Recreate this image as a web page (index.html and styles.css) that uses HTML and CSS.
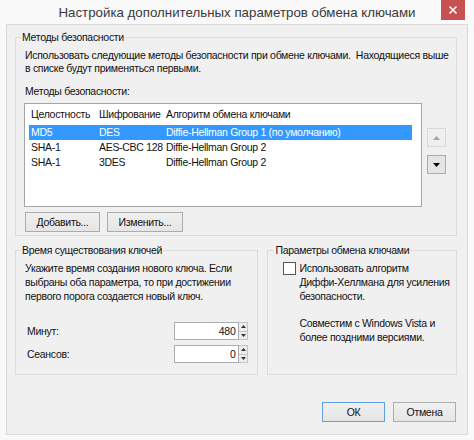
FILE: index.html
```html
<!DOCTYPE html>
<html lang="ru">
<head>
<meta charset="utf-8">
<title>Настройка дополнительных параметров обмена ключами</title>
<link rel="stylesheet" href="styles.css">
</head>
<body>
<div class="window">
  <div class="titlebar">
    <div class="title">Настройка дополнительных параметров обмена ключами</div>
    <div class="close">
      <svg width="10" height="10" viewBox="0 0 10 10"><path d="M1.5 1.5 L8.5 8.5 M8.5 1.5 L1.5 8.5" stroke="#fff" stroke-width="1.6" fill="none"/></svg>
    </div>
  </div>
  <div class="client">
    <fieldset class="group g-methods">
      <legend>Методы безопасности</legend>
      <div class="group-body methods-body">
        <p class="desc">Использовать следующие методы безопасности при обмене ключами.&nbsp; Находящиеся выше<br>в списке будут применяться первыми.</p>
        <div class="list-label">Методы безопасности:</div>
        <div class="list-row">
          <div class="listbox">
            <div class="lv-head"><span class="c1">Целостность</span><span class="c2">Шифрование</span><span class="c3">Алгоритм обмена ключами</span></div>
            <div class="lv-item selected"><span class="c1">MD5</span><span class="c2">DES</span><span class="c3">Diffie-Hellman Group 1 (по умолчанию)</span></div>
            <div class="lv-item"><span class="c1">SHA-1</span><span class="c2">AES-CBC 128</span><span class="c3">Diffie-Hellman Group 2</span></div>
            <div class="lv-item"><span class="c1">SHA-1</span><span class="c2">3DES</span><span class="c3">Diffie-Hellman Group 2</span></div>
          </div>
          <div class="movers">
            <button class="mv mv-up" disabled><svg width="7" height="4" viewBox="0 0 7 4"><path d="M0 4 L3.5 0 L7 4 Z" fill="#a6a6a6"/></svg></button>
            <button class="mv mv-down"><svg width="7" height="4" viewBox="0 0 7 4"><path d="M0 0 L7 0 L3.5 4 Z" fill="#000"/></svg></button>
          </div>
        </div>
        <div class="btn-row">
          <button class="btn btn-add">Добавить...</button>
          <button class="btn btn-edit">Изменить...</button>
        </div>
      </div>
    </fieldset>

    <div class="lower">
      <fieldset class="group g-life">
        <legend>Время существования ключей</legend>
        <div class="group-body life-body">
          <p class="life-text">Укажите время создания нового ключа. Если<br>выбраны оба параметра, то при достижении<br>первого порога создается новый ключ.</p>
          <div class="field-row first">
            <span class="field-label">Минут:</span>
            <div class="spin">
              <div class="spin-input">480</div>
              <div class="spin-btns">
                <span class="sb"><svg width="5" height="3" viewBox="0 0 5 3"><path d="M0 3 L2.5 0 L5 3 Z" fill="#333"/></svg></span>
                <span class="sb"><svg width="5" height="3" viewBox="0 0 5 3"><path d="M0 0 L5 0 L2.5 3 Z" fill="#333"/></svg></span>
              </div>
            </div>
          </div>
          <div class="field-row">
            <span class="field-label">Сеансов:</span>
            <div class="spin">
              <div class="spin-input">0</div>
              <div class="spin-btns">
                <span class="sb"><svg width="5" height="3" viewBox="0 0 5 3"><path d="M0 3 L2.5 0 L5 3 Z" fill="#333"/></svg></span>
                <span class="sb"><svg width="5" height="3" viewBox="0 0 5 3"><path d="M0 0 L5 0 L2.5 3 Z" fill="#333"/></svg></span>
              </div>
            </div>
          </div>
        </div>
      </fieldset>

      <fieldset class="group g-dh">
        <legend>Параметры обмена ключами</legend>
        <div class="group-body dh-body">
          <div class="check-row">
            <span class="checkbox"></span>
            <span class="check-text">Использовать алгоритм<br>Диффи-Хеллмана для усиления<br>безопасности.</span>
          </div>
          <p class="compat">Совместим с Windows Vista и<br>более поздними версиями.</p>
        </div>
      </fieldset>
    </div>

    <div class="footer">
      <button class="btn btn-ok">ОК</button>
      <button class="btn btn-cancel">Отмена</button>
    </div>
  </div>
</div>
</body>
</html>
```

FILE: styles.css
```css
* { box-sizing: border-box; }

html, body {
  margin: 0;
  padding: 0;
  background: #f9f9f9;
}

body {
  font-family: "Liberation Sans", Arial, sans-serif;
  font-size: 10.5px;
  letter-spacing: -0.3px;
  color: #111;
}

.window {
  width: 474px;
  height: 440px;
  background: #f9f9f9;
}

.titlebar {
  height: 24px;
  display: flex;
  align-items: flex-start;
  padding-left: 33px;
}

.title {
  flex: 1;
  min-width: 0;
  text-align: center;
  font-size: 13.3px;
  letter-spacing: 0;
  line-height: 24px;
  color: #3a3a3a;
  white-space: nowrap;
  padding-top: 1px;
}

.close {
  flex: none;
  width: 24px;
  height: 20px;
  margin-right: 9px;
  background: #c75050;
  display: flex;
  align-items: center;
  justify-content: center;
}

.client {
  margin: 0 6px;
  height: 411px;
  border: 1px solid #dadada;
  background: #f0f0f0;
  padding-top: 1px;
}

p { margin: 0; }

.group {
  margin: 0;
  padding: 0;
  border: 1px solid #dcdcdc;
  min-width: 0;
}

.group legend {
  margin-left: 5px;
  padding: 0 1px;
  line-height: 13px;
  color: #111;
}

/* ---- security methods ---- */
.g-methods {
  margin: 5px 10px 0 8px;
}

.methods-body {
  padding: 0 0 3px 8px;
}

.desc {
  margin-top: 5px;
  padding-left: 1px;
  line-height: 13px;
  white-space: nowrap;
}

.list-label {
  margin-top: 10px;
  padding-left: 1px;
  line-height: 13px;
}

.list-row {
  display: flex;
  margin-top: 5px;
}

.listbox {
  width: 398px;
  height: 104px;
  border: 1px solid #a5a5a5;
  background: #fff;
  padding: 0 0 0 4px;
}

.lv-head, .lv-item {
  display: flex;
  width: 383px;
  white-space: nowrap;
}

.lv-head {
  height: 21px;
  line-height: 20px;
}

.lv-item {
  height: 15px;
  line-height: 14px;
}

.lv-item.selected {
  background: #3399ff;
  color: #fff;
}

.c1 { width: 68px; padding-left: 2px; }
.c2 { width: 69px; padding-left: 2px; }
.c3 { flex: 1; }

.movers {
  display: flex;
  flex-direction: column;
  margin-left: 5px;
  padding-top: 25px;
  gap: 8px;
}

.mv {
  width: 19px;
  height: 19px;
  padding: 0;
  display: flex;
  align-items: center;
  justify-content: center;
  border: 1px solid #acacac;
  background: #e5e5e5;
}

.mv-up {
  border-color: #d9d9d9;
  background: #efefef;
}

.btn-row {
  display: flex;
  gap: 7px;
  margin-top: 5px;
  padding-left: 1px;
}

.btn {
  font-family: inherit;
  font-size: 10.5px;
  letter-spacing: -0.3px;
  color: #111;
  height: 20px;
  padding: 0;
  border: 1px solid #acacac;
  background: linear-gradient(#f0f0f0, #e5e5e5);
  line-height: 18px;
  text-align: center;
}

.btn-add { width: 75px; }
.btn-edit { width: 76px; }

/* ---- lower groups ---- */
.lower {
  display: flex;
  margin: 8px 10px 0 8px;
  gap: 9px;
}

.g-life {
  width: 244px;
  height: 131px;
}

.life-body {
  padding: 0 9px;
}

.life-text {
  margin-top: 4px;
  line-height: 14px;
  white-space: nowrap;
}

.field-row {
  display: flex;
  align-items: center;
  justify-content: space-between;
  padding-left: 2px;
  margin-top: 5px;
}

.field-row.first { margin-top: 19px; }

.spin {
  display: flex;
  height: 18px;
}

.spin-input {
  width: 65px;
  height: 18px;
  border: 1px solid #abadb3;
  background: #fff;
  text-align: right;
  padding-right: 3px;
  line-height: 16px;
}

.spin-btns {
  width: 9px;
  display: flex;
  flex-direction: column;
  border: 1px solid #c5c5c5;
  border-left: none;
  background: #ececec;
}

.sb {
  flex: 1;
  display: flex;
  align-items: center;
  justify-content: center;
}

.sb + .sb { border-top: 1px solid #c5c5c5; }

.g-dh {
  width: 190px;
  height: 131px;
}

.g-dh legend { margin-left: 6px; }

.dh-body {
  padding: 0 8px 0 15px;
}

.check-row {
  display: flex;
  gap: 3px;
  margin-top: 4px;
}

.checkbox {
  flex: none;
  width: 13px;
  height: 13px;
  margin-top: 1px;
  border: 1px solid #555;
  background: #fff;
}

.check-text {
  line-height: 14px;
  white-space: nowrap;
}

.compat {
  margin-top: 13px;
  padding-left: 16px;
  line-height: 14px;
  white-space: nowrap;
}

/* ---- footer ---- */
.footer {
  display: flex;
  justify-content: flex-end;
  gap: 8px;
  margin-top: 27px;
  padding-right: 11px;
}

.btn-ok, .btn-cancel { width: 63px; }

.btn-ok { border-color: #5fa0e0; }
```
